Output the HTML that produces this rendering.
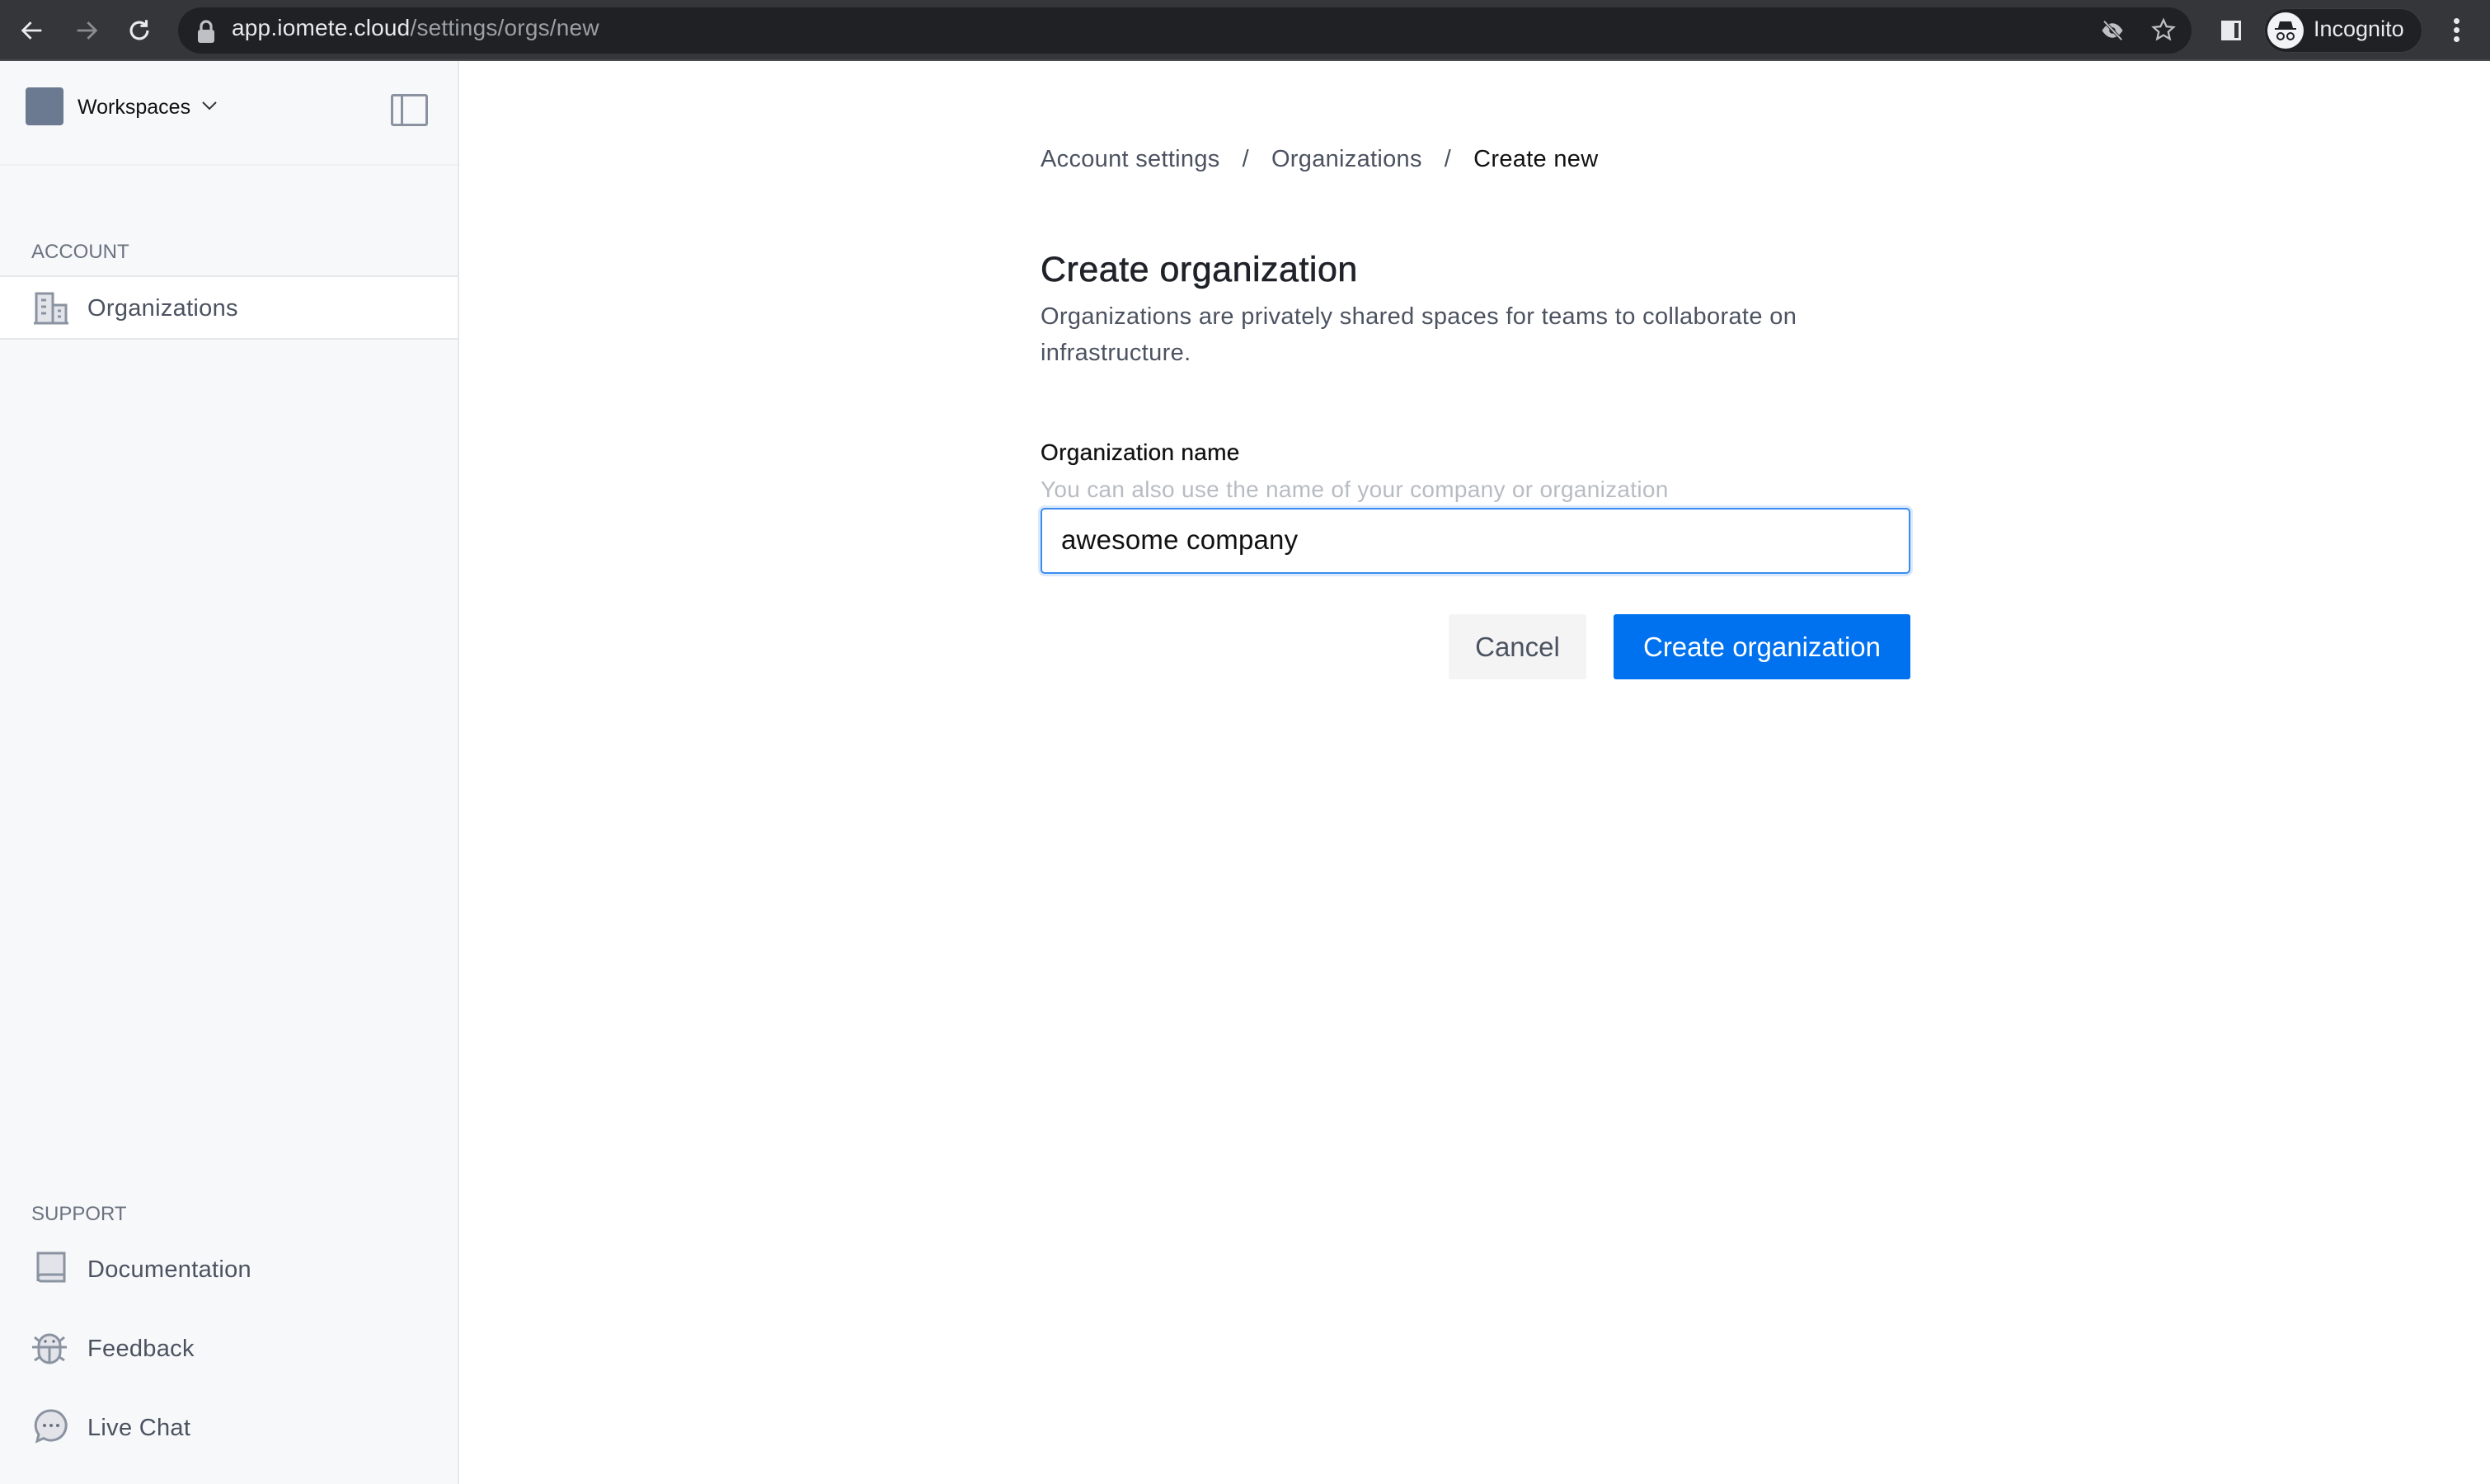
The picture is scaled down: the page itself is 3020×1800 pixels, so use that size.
<!DOCTYPE html>
<html><head><meta charset="utf-8"><style>
*{box-sizing:border-box;margin:0;padding:0}
body{width:3020px;height:1800px;overflow:hidden;font-family:"Liberation Sans",sans-serif;background:#fff;position:relative}
.abs{position:absolute;white-space:nowrap}
#bar{position:absolute;left:0;top:0;width:3020px;height:74px;background:#35363a;border-bottom:2px solid #4a4b4f}
#omni{position:absolute;left:216px;top:9px;width:2442px;height:56px;border-radius:28px;background:#202124}
#side{position:absolute;left:0;top:74px;width:557px;height:1726px;background:#f7f8fa;border-right:2px solid #e6e8eb}
.sl{color:#4b5260;font-size:29px;letter-spacing:0.3px}
.mt{color:#6b7280;font-size:24px}
</style></head><body>
<div id="bar">
  <svg class="abs" style="left:22px;top:20px" width="34" height="34" viewBox="0 0 24 24"><path d="M20 12H5M11 5l-7 7 7 7" stroke="#e8eaed" stroke-width="2" fill="none"/></svg>
  <svg class="abs" style="left:88px;top:20px" width="34" height="34" viewBox="0 0 24 24"><path d="M4 12h15M13 5l7 7-7 7" stroke="#8a8c90" stroke-width="2" fill="none"/></svg>
  <svg class="abs" style="left:152px;top:20px" width="34" height="34" viewBox="0 0 24 24"><path d="M19 12a7 7 0 1 1-2.1-5M18 3v5h-5" stroke="#e8eaed" stroke-width="2.2" fill="none"/></svg>
  <div id="omni"></div>
  <svg class="abs" style="left:238px;top:24px" width="24" height="28" viewBox="0 0 12 14"><rect x="1" y="6" width="10" height="8" rx="1.5" fill="#bdc1c6"/><path d="M3 6V4a3 3 0 0 1 6 0v2" stroke="#bdc1c6" stroke-width="1.6" fill="none"/></svg>
  <div class="abs" style="left:281px;top:18px;font-size:28px;color:#e8eaed;letter-spacing:0.2px">app.iomete.cloud<span style="color:#9aa0a6">/settings/orgs/new</span></div>
  <svg class="abs" style="left:2546px;top:22px" width="32" height="30" viewBox="0 0 24 24"><path d="M2 12s4-7 10-7 10 7 10 7-4 7-10 7S2 12 2 12z" fill="#bdc1c6"/><circle cx="12" cy="12" r="3" fill="#202124"/><path d="M4 3l17 18" stroke="#202124" stroke-width="3"/><path d="M4 3l17 18" stroke="#bdc1c6" stroke-width="1.6"/></svg>
  <svg class="abs" style="left:2607px;top:20px" width="34" height="34" viewBox="0 0 24 24"><path d="M12 3l2.6 5.6 6 .6-4.5 4 1.3 6L12 16l-5.4 3.2 1.3-6-4.5-4 6-.6z" stroke="#bdc1c6" stroke-width="1.6" fill="none"/></svg>
  <div class="abs" style="left:2694px;top:25px;width:24px;height:24px;border:3px solid #e8eaed;border-left-width:16px;background:#35363a"></div>
  <div class="abs" style="left:2746px;top:10px;width:192px;height:54px;border-radius:27px;background:#202124;border:1px solid #3c3d40"></div>
  <div class="abs" style="left:2750px;top:15px;width:44px;height:44px;border-radius:50%;background:#f1f3f4"></div>
  <svg class="abs" style="left:2756px;top:22px" width="32" height="30" viewBox="0 0 32 30"><path d="M9 4h14l2 8H7z" fill="#202124"/><rect x="3" y="12" width="26" height="2" fill="#202124"/><circle cx="10" cy="22" r="4" stroke="#202124" stroke-width="2" fill="none"/><circle cx="22" cy="22" r="4" stroke="#202124" stroke-width="2" fill="none"/></svg>
  <div class="abs" style="left:2806px;top:20px;font-size:27px;color:#e8eaed">Incognito</div>
  <div class="abs" style="left:2976px;top:22px;width:7px;height:7px;border-radius:50%;background:#e8eaed;box-shadow:0 11px 0 #e8eaed,0 22px 0 #e8eaed"></div>
</div>

<div id="side">
  <div class="abs" style="left:31px;top:32px;width:46px;height:46px;border-radius:4px;background:#6b7a90"></div>
  <div class="abs" style="left:94px;top:42px;font-size:25px;color:#111">Workspaces</div>
  <svg class="abs" style="left:244px;top:47px" width="20" height="14" viewBox="0 0 20 14"><path d="M2 3l8 8 8-8" stroke="#333" stroke-width="2" fill="none"/></svg>
  <div class="abs" style="left:474px;top:40px;width:45px;height:39px;border:3px solid #8b93a1;border-radius:3px"><div style="position:absolute;left:9px;top:0;width:3px;height:100%;background:#8b93a1"></div></div>
  <div class="abs" style="left:0;top:125px;width:555px;height:2px;background:#eef0f2"></div>
  <div class="abs mt" style="left:38px;top:218px">ACCOUNT</div>
  <div class="abs" style="left:0;top:260px;width:555px;height:78px;background:#fff;border-top:2px solid #e5e7eb;border-bottom:2px solid #e5e7eb"></div>
  <svg class="abs" style="left:40px;top:280px" width="44" height="40" viewBox="0 0 44 40"><rect x="4" y="2" width="20" height="36" fill="#e2e4ea" stroke="#8b93a1" stroke-width="3"/><rect x="24" y="16" width="16" height="22" fill="#e2e4ea" stroke="#8b93a1" stroke-width="3"/><path d="M10 10h6M10 18h6M10 26h6M30 23h4M30 30h4M1 38h42" stroke="#8b93a1" stroke-width="3"/></svg>
  <div class="abs sl" style="left:106px;top:284px">Organizations</div>
  <div class="abs mt" style="left:38px;top:1385px">SUPPORT</div>
  <svg class="abs" style="left:40px;top:1442px" width="42" height="44" viewBox="0 0 42 44"><path d="M6 38V4h32v34H10a4 4 0 0 1 0-8h28" fill="#e2e4ea" stroke="#8b93a1" stroke-width="3"/></svg>
  <div class="abs sl" style="left:106px;top:1450px">Documentation</div>
  <svg class="abs" style="left:38px;top:1538px" width="44" height="44" viewBox="0 0 44 44"><path d="M9 20a13 13 0 0 1 26 0v8a13 13 0 0 1-26 0z" fill="#e2e4ea" stroke="#8b93a1" stroke-width="3"/><path d="M9 22h26M22 22v19M1 22h8M35 22h8M4 10l6 5M40 10l-6 5M4 38l6-4M40 38l-6-4" stroke="#8b93a1" stroke-width="3"/><circle cx="17" cy="15" r="1.7" fill="#6b7280"/><circle cx="27" cy="15" r="1.7" fill="#6b7280"/></svg>
  <div class="abs sl" style="left:106px;top:1546px">Feedback</div>
  <svg class="abs" style="left:40px;top:1634px" width="44" height="44" viewBox="0 0 44 44"><path d="M22 3a18 18 0 1 1-9 33.5L5 40l2-8A18 18 0 0 1 22 3z" fill="#e2e4ea" stroke="#8b93a1" stroke-width="3"/><circle cx="14" cy="21" r="2" fill="#6b7280"/><circle cx="22" cy="21" r="2" fill="#6b7280"/><circle cx="30" cy="21" r="2" fill="#6b7280"/></svg>
  <div class="abs sl" style="left:106px;top:1642px">Live Chat</div>
</div>

<div class="abs" style="left:1262px;top:177px;font-size:29px;color:#4b5260;letter-spacing:0.3px">Account settings<span style="margin:0 27px">/</span>Organizations<span style="margin:0 27px">/</span><span style="color:#111">Create new</span></div>
<div class="abs" style="left:1262px;top:303px;font-size:43px;color:#1f2329;letter-spacing:0.5px;-webkit-text-stroke:0.6px #1f2329">Create organization</div>
<div class="abs" style="left:1262px;top:362px;font-size:29px;color:#4b5260;line-height:44px;letter-spacing:0.35px">Organizations are privately shared spaces for teams to collaborate on<br>infrastructure.</div>
<div class="abs" style="left:1262px;top:533px;font-size:28px;color:#111;letter-spacing:0.3px;-webkit-text-stroke:0.3px #111">Organization name</div>
<div class="abs" style="left:1262px;top:578px;font-size:28px;color:#b8bcc2;letter-spacing:0.3px">You can also use the name of your company or organization</div>
<div class="abs" style="left:1262px;top:616px;width:1055px;height:80px;border:2px solid #3b8bf0;border-radius:5px;box-shadow:0 0 0 3px #dbe9fd;background:#fff"></div>
<div class="abs" style="left:1287px;top:636px;font-size:33px;color:#111;letter-spacing:0.2px">awesome company</div>
<div class="abs" style="left:1757px;top:745px;width:167px;height:79px;background:#f4f4f5;border-radius:3px;font-size:33px;color:#4b5260;text-align:center;line-height:79px">Cancel</div>
<div class="abs" style="left:1957px;top:745px;width:360px;height:79px;background:#0072f0;border-radius:3px;font-size:33px;color:#fff;text-align:center;line-height:79px">Create organization</div>
</body></html>
